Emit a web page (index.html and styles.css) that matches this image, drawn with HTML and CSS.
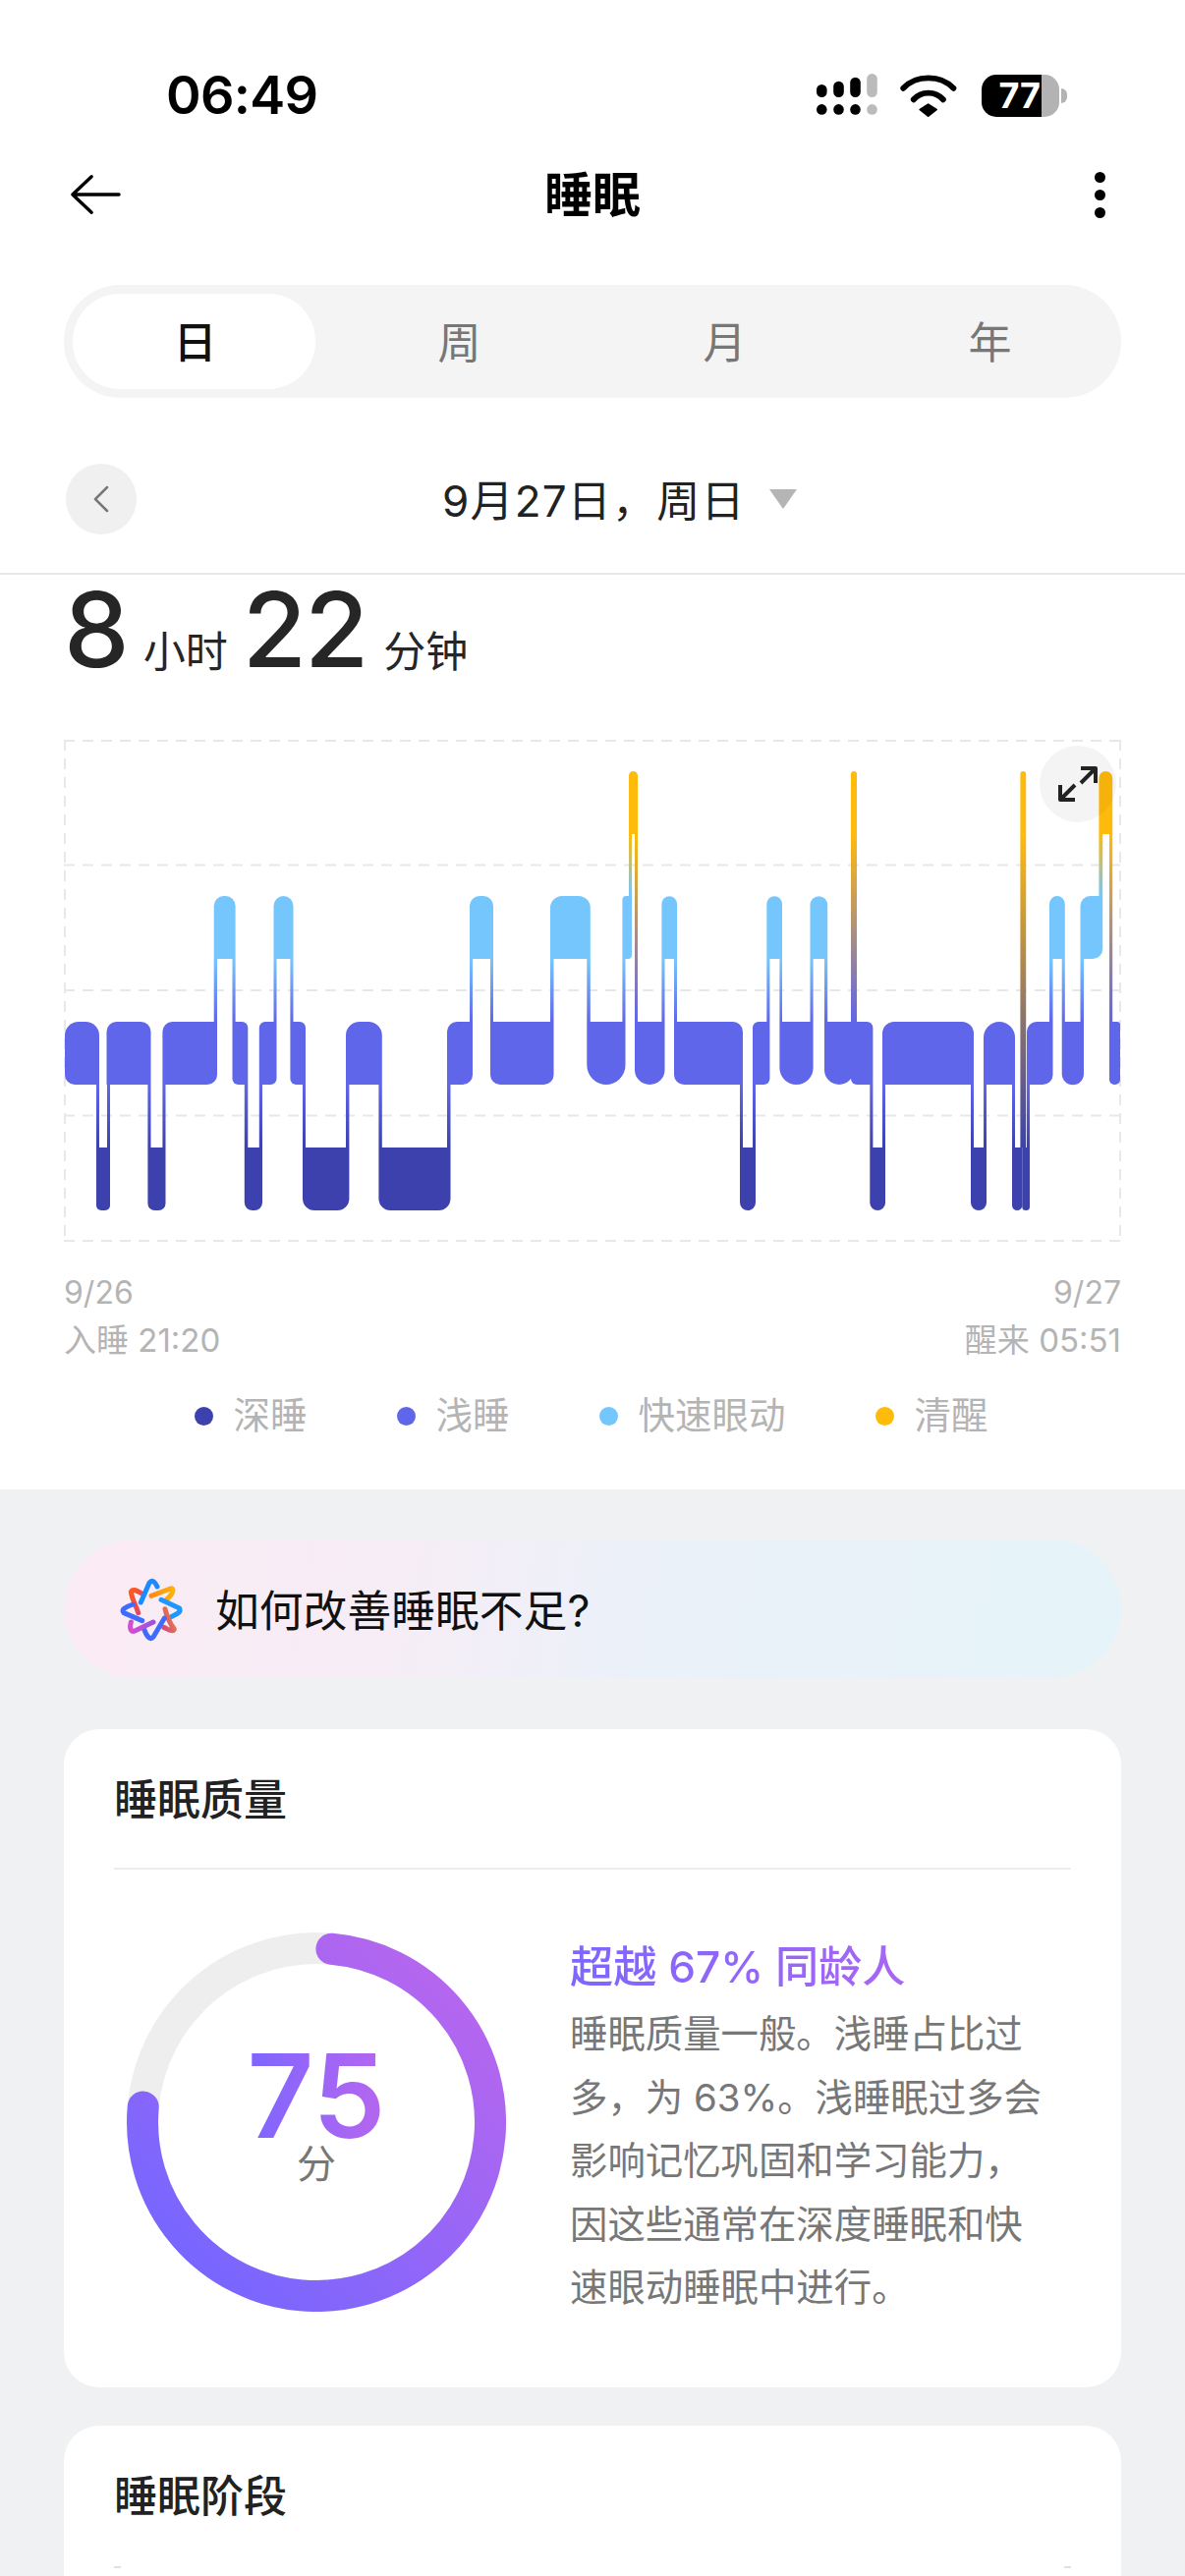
FILE: index.html
```html
<!DOCTYPE html>
<html lang="zh-CN">
<head>
<meta charset="utf-8">
<title>睡眠</title>
<link rel="stylesheet" href="styles.css">
</head>
<body>
<div class="page">
  <section class="top">
    <div class="status">
      <span class="time">06:49</span>
      <div class="status-icons">
        <svg class="signal" width="64" height="44" viewBox="0 0 64 44" aria-hidden="true">
          <g class="sig-on">
            <rect x="1" y="11" width="10.6" height="13" rx="5.3"/><rect x="18.2" y="7.7" width="10.6" height="16.3" rx="5.3"/><rect x="35.2" y="3.7" width="10.6" height="20.3" rx="5.3"/>
            <circle cx="6.3" cy="36.4" r="5.3"/><circle cx="23.5" cy="36.4" r="5.3"/><circle cx="40.5" cy="36.4" r="5.3"/>
          </g>
          <g class="sig-off"><rect x="52.2" width="10.6" height="24" rx="5.3"/><circle cx="57.5" cy="36.4" r="5.3"/></g>
        </svg>
        <svg class="wifi" width="58" height="44" viewBox="350 76 176 132" aria-hidden="true">
          <path class="wifi-arc" d="M360 120C400 78 475 78 515 120"/>
          <path class="wifi-arc" d="M392 155C415 128 460 128 483 155"/>
          <path class="wifi-dot" d="M437 170L462 186L437 206L412 186Z"/>
        </svg>
        <div class="battery"><div class="batt-fill">77</div><div class="batt-rest"></div></div>
        <span class="batt-nub"></span>
      </div>
    </div>
    <header class="nav">
      <svg class="back" width="54" height="42" viewBox="0 0 54 42" aria-hidden="true"><path d="M52 21H3M23 2L3 21L23 40"/></svg>
      <h1 class="nav-title">睡眠</h1>
      <div class="more"><i></i><i></i><i></i></div>
    </header>
    <nav class="tabs">
      <span class="tab tab-on">日</span><span class="tab">周</span><span class="tab">月</span><span class="tab">年</span>
    </nav>
    <div class="date-row">
      <span class="date-prev"><svg width="18" height="28" viewBox="0 0 18 28" aria-hidden="true"><path d="M15 2L3 14L15 26"/></svg></span>
      <span class="date-text">9月27日，周日</span>
      <span class="date-caret"></span>
    </div>
    <div class="duration">
      <span class="big">8</span><span class="unit">小时</span><span class="big">22</span><span class="unit">分钟</span>
    </div>
    <div class="chart">
      <svg width="1076" height="511" viewBox="0 0 1076 511" aria-hidden="true">
        <defs>
          <linearGradient id="remLight" x1="0" y1="0" x2="0" y2="1"><stop offset="0" stop-color="#75c6fd"/><stop offset="1" stop-color="#6066e9"/></linearGradient>
          <linearGradient id="lightDeep" x1="0" y1="0" x2="0" y2="1"><stop offset="0" stop-color="#6066e9"/><stop offset="1" stop-color="#3c41ae"/></linearGradient>
          <linearGradient id="awakeRem" x1="0" y1="0" x2="0" y2="1"><stop offset="0" stop-color="#ffbb0b"/><stop offset="1" stop-color="#75c6fd"/></linearGradient>
          <linearGradient id="awakeLight" x1="0" y1="0" x2="0" y2="1"><stop offset="0" stop-color="#ffbb0b"/><stop offset="1" stop-color="#6066e9"/></linearGradient>
          <linearGradient id="awakeDeep" x1="0" y1="0" x2="0" y2="1"><stop offset="0" stop-color="#ffbb0b"/><stop offset="1" stop-color="#3c41ae"/></linearGradient>
        </defs>
        <g class="grid">
          <path d="M0 1H1076M0 127.5H1076M0 255H1076M0 382.5H1076M0 510H1076M1 0V511M1075 0V511"/>
        </g>
        <g fill="url(#lightDeep)">
          <rect x="33" y="351" width="3" height="64"/><rect x="44" y="351" width="3" height="64"/><rect x="85.4" y="351" width="3.1" height="64"/><rect x="100.4" y="351" width="3.1" height="64"/><rect x="183.8" y="351" width="3.5" height="64"/><rect x="198.8" y="351" width="3.2" height="64"/><rect x="243" y="351" width="3" height="64"/><rect x="287" y="351" width="3.4" height="64"/><rect x="320.4" y="351" width="3.4" height="64"/><rect x="390" y="351" width="3.5" height="64"/><rect x="688" y="351" width="3" height="64"/><rect x="701" y="351" width="3" height="64"/><rect x="820.3" y="351" width="3.1" height="64"/><rect x="833" y="351" width="3" height="64"/><rect x="923" y="351" width="3" height="64"/><rect x="936" y="351" width="3" height="64"/><rect x="965" y="351" width="3" height="64"/><rect x="980" y="351" width="3" height="64"/>
        </g>
        <g fill="url(#remLight)">
          <rect x="152.7" y="223" width="3.3" height="64"/><rect x="171.5" y="223" width="3.1" height="64"/><rect x="213.5" y="223" width="3" height="64"/><rect x="230.4" y="223" width="3.1" height="64"/><rect x="413" y="223" width="3" height="64"/><rect x="434" y="223" width="3" height="64"/><rect x="495" y="223" width="3.5" height="64"/><rect x="532.3" y="223" width="3.5" height="64"/><rect x="568.4" y="223" width="3.1" height="64"/><rect x="608.4" y="223" width="3.1" height="64"/><rect x="621" y="223" width="3" height="64"/><rect x="715.3" y="223" width="3.1" height="64"/><rect x="728.4" y="223" width="2.6" height="64"/><rect x="759.5" y="223" width="3.1" height="64"/><rect x="774" y="223" width="3.2" height="64"/><rect x="1003" y="223" width="3.5" height="64"/><rect x="1015.7" y="223" width="3.1" height="64"/><rect x="1034.5" y="223" width="3.5" height="64"/>
        </g>
        <g fill="url(#awakeRem)">
          <rect x="575" y="96" width="3" height="63"/><rect x="1053.4" y="96" width="3.8" height="63"/>
        </g>
        <g fill="url(#awakeLight)">
          <rect x="581" y="96" width="3" height="191"/><rect x="801" y="96" width="6" height="191"/><rect x="1064" y="96" width="3.2" height="191"/>
        </g>
        <rect x="973.4" y="96" width="5.8" height="319" fill="url(#awakeDeep)"/>
        <g class="s-light">
          <path d="M15 287H22a14 14 0 0 1 14 14V351H11a10 10 0 0 1-10-10V301a14 14 0 0 1 14-14Z"/>
          <path d="M53.5 287H78.5a10 10 0 0 1 10 10V351H43.5V297a10 10 0 0 1 10-10Z"/>
          <path d="M110.4 287H156V341a10 10 0 0 1-10 10H100.4V297a10 10 0 0 1 10-10Z"/>
          <path d="M171.5 287H181.3a6 6 0 0 1 6 6V351H177.5a6 6 0 0 1-6-6Z"/>
          <path d="M204.8 287H216.5V345a6 6 0 0 1-6 6H198.8V293a6 6 0 0 1 6-6Z"/>
          <path d="M230.4 287H240a6 6 0 0 1 6 6V351H236.4a6 6 0 0 1-6-6Z"/>
          <path d="M301 287H309.8a14 14 0 0 1 14 14V351H287V301a14 14 0 0 1 14-14Z"/>
          <path d="M400 287H416V341a10 10 0 0 1-10 10H390V297a10 10 0 0 1 10-10Z"/>
          <path d="M434 287H498.5V341a10 10 0 0 1-10 10H444a10 10 0 0 1-10-10Z"/>
          <path d="M532.3 287H571.5V331a20 20 0 0 1-20 20H552.3a20 20 0 0 1-20-20Z"/>
          <path d="M581 287H611.5V336a15 15 0 0 1-15 15H596a15 15 0 0 1-15-15Z"/>
          <path d="M621 287H681a10 10 0 0 1 10 10V351H631a10 10 0 0 1-10-10Z"/>
          <path d="M707 287H718.4V345a6 6 0 0 1-6 6H701V293a6 6 0 0 1 6-6Z"/>
          <path d="M728.4 287H762.6V334a17 17 0 0 1-17 17H745.4a17 17 0 0 1-17-17Z"/>
          <path d="M774 287H804V336a15 15 0 0 1-15 15H789a15 15 0 0 1-15-15Z"/>
          <path d="M801 287H817.4a6 6 0 0 1 6 6V351H807a6 6 0 0 1-6-6Z"/>
          <path d="M845 287H914a12 12 0 0 1 12 12V351H833V299a12 12 0 0 1 12-12Z"/>
          <path d="M952 287a16 16 0 0 1 16 16V351H936V303a16 16 0 0 1 16-16Z"/>
          <path d="M990 287H1006.5V341a10 10 0 0 1-10 10H980V297a10 10 0 0 1 10-10Z"/>
          <path d="M1015.7 287H1038V340a11 11 0 0 1-22.3 0Z"/>
          <path d="M1064 287H1072a3 3 0 0 1 3 3V346a5 5 0 0 1-5 5H1069a5 5 0 0 1-5-5Z"/>
        </g>
        <g class="s-deep">
          <path d="M33 415H47V474a5 5 0 0 1-5 5H38a5 5 0 0 1-5-5Z"/>
          <path d="M85.4 415H103.5V472a7 7 0 0 1-7 7H92.4a7 7 0 0 1-7-7Z"/>
          <path d="M183.8 415H202V471a8 8 0 0 1-8 8H191.8a8 8 0 0 1-8-8Z"/>
          <path d="M243 415H290.4V467a12 12 0 0 1-12 12H255a12 12 0 0 1-12-12Z"/>
          <path d="M320.4 415H393.5V467a12 12 0 0 1-12 12H332.4a12 12 0 0 1-12-12Z"/>
          <path d="M688 415H704V471a8 8 0 0 1-16 0Z"/>
          <path d="M820.3 415H836V471.2a7.85 7.85 0 0 1-15.7 0Z"/>
          <path d="M923 415H939V471a8 8 0 0 1-16 0Z"/>
          <path d="M965 415H975.3V473.9a5.15 5.15 0 0 1-10.3 0Z"/>
          <path d="M975.3 415H983V475.2a3.85 3.85 0 0 1-7.7 0Z"/>
        </g>
        <g class="s-rem">
          <path d="M152.7 223V169a10 10 0 0 1 10-10H164.6a10 10 0 0 1 10 10V223Z"/>
          <path d="M213.5 223V169a10 10 0 0 1 20 0V223Z"/>
          <path d="M413 223V169a10 10 0 0 1 10-10H427a10 10 0 0 1 10 10V223Z"/>
          <path d="M495 223V171a12 12 0 0 1 12-12H523.8a12 12 0 0 1 12 12V223Z"/>
          <path d="M572.4 159H578V219a4 4 0 0 1-4 4H568.4V163a4 4 0 0 1 4-4Z"/>
          <path d="M608.4 223V167a7.8 7.8 0 0 1 15.6 0V223Z"/>
          <path d="M715.3 223V167a7.85 7.85 0 0 1 15.7 0V223Z"/>
          <path d="M759.5 223V168a8.85 8.85 0 0 1 17.7 0V223Z"/>
          <path d="M1003 223V167a7.9 7.9 0 0 1 15.8 0V223Z"/>
          <path d="M1044.5 159H1057.2V213a10 10 0 0 1-10 10H1034.5V169a10 10 0 0 1 10-10Z"/>
        </g>
        <g class="s-awake">
          <path d="M575 96V36.5a4.5 4.5 0 0 1 9 0V96Z"/>
          <path d="M801 96V35a3 3 0 0 1 6 0V96Z"/>
          <path d="M973.4 96V35a2.9 2.9 0 0 1 5.8 0V96Z"/>
          <path d="M1053.4 96V39a6.9 6.9 0 0 1 13.8 0V96Z"/>
        </g>
      </svg>
      <span class="expand">
        <svg width="40" height="40" viewBox="0 0 40 40" aria-hidden="true"><path d="M23 4H38V19M38 4L23 19M2 21V36H17M2 36L17 21"/></svg>
      </span>
    </div>
    <div class="chart-labels">
      <div><p>9/26</p><p>入睡 21:20</p></div>
      <div class="chart-labels-end"><p>9/27</p><p>醒来 05:51</p></div>
    </div>
    <ul class="legend">
      <li><i class="dot d-deep"></i>深睡</li>
      <li><i class="dot d-light"></i>浅睡</li>
      <li><i class="dot d-rem"></i>快速眼动</li>
      <li><i class="dot d-awake"></i>清醒</li>
    </ul>
  </section>
  <main class="lower">
    <div class="ask">
      <svg class="ask-star" width="72" height="72" viewBox="84 93 216 216" aria-hidden="true">
        <defs>
          <linearGradient id="starA" x1="0" y1="0" x2="1" y2="1"><stop offset="0" stop-color="#ff5b1f"/><stop offset="1" stop-color="#e0456a"/></linearGradient>
          <linearGradient id="starB" x1="0" y1="0" x2="1" y2="0"><stop offset="0" stop-color="#ff8a1c"/><stop offset="1" stop-color="#ffb300"/></linearGradient>
          <linearGradient id="starC" x1="1" y1="0" x2="0" y2="1"><stop offset="0" stop-color="#e8883c"/><stop offset="1" stop-color="#d84a7c"/></linearGradient>
          <linearGradient id="starD" x1="1" y1="0" x2="0" y2="0"><stop offset="0" stop-color="#a050e0"/><stop offset="1" stop-color="#d24fd0"/></linearGradient>
        </defs>
        <g class="star">
          <path stroke="url(#starA)" d="M152 212C146 190 132 170 130 148C135 136 150 146 162 152"/>
          <path stroke="#1a8cff" d="M160 180L186 120C195 108 205 120 210 132"/>
          <path stroke="url(#starB)" d="M192 160L250 138C262 135 262 150 238 172"/>
          <path stroke="#1f97ff" d="M222 172L278 198C284 212 268 216 252 224"/>
          <path stroke="url(#starC)" d="M234 200C240 226 246 240 262 262C258 272 244 262 230 256"/>
          <path stroke="#3f6cff" d="M232 228L198 286C188 296 178 284 170 262"/>
          <path stroke="url(#starD)" d="M198 240L140 268C126 270 126 254 130 240"/>
          <path stroke="#3f6cff" d="M164 236L108 212C98 202 114 194 136 186"/>
        </g>
      </svg>
      <span class="ask-text">如何改善睡眠不足?</span>
    </div>
    <article class="card card-quality">
      <h2 class="card-title">睡眠质量</h2>
      <div class="quality">
        <div class="ring">
          <svg width="386" height="386" viewBox="0 0 386 386" aria-hidden="true">
            <defs>
              <linearGradient id="ringGrad" gradientUnits="userSpaceOnUse" x1="330" y1="40" x2="60" y2="330"><stop offset="0" stop-color="#b766ee"/><stop offset="1" stop-color="#7866ff"/></linearGradient>
            </defs>
            <circle class="ring-track" cx="193" cy="193" r="177"/>
            <path class="ring-value" d="M208.4 16.7A177 177 0 1 1 16.7 177.6"/>
          </svg>
          <div class="ring-center">
            <span class="ring-score">75</span>
            <span class="ring-unit">分</span>
          </div>
        </div>
        <div class="quality-text">
          <h3 class="quality-head">超越 67% 同龄人</h3>
          <p class="quality-body">睡眠质量一般。浅睡占比过<br>多，为 63%。浅睡眠过多会<br>影响记忆巩固和学习能力，<br>因这些通常在深度睡眠和快<br>速眼动睡眠中进行。</p>
        </div>
      </div>
    </article>
    <article class="card card-stage">
      <h2 class="card-title card-title-plain">睡眠阶段</h2>
      <div class="stage-ticks"><i></i><i></i></div>
    </article>
  </main>
</div>
</body>
</html>
```
FILE: styles.css
```css
* { box-sizing: border-box; }
html, body { margin: 0; padding: 0; }
body {
  background: #f0f1f3;
  font-family: Inter, "Noto Sans CJK SC", sans-serif;
  color: #222;
}
h1, h2, h3, p, ul { margin: 0; padding: 0; font-weight: inherit; font-size: inherit; }
ul { list-style: none; }
i { display: block; font-style: normal; }
.page { width: 1206px; height: 2622px; overflow: hidden; }

.top { background: #fff; height: 1516px; }

.status { height: 150px; padding: 44px 0 0 169px; display: flex; align-items: center; justify-content: space-between; }
.time { font-size: 54px; font-weight: 600; color: #000; line-height: 1; letter-spacing: -0.7px; }
.status-icons { display: flex; align-items: center; padding-right: 120px; }
.signal { margin-right: 22px; }
.sig-on { fill: #000; }
.sig-off { fill: #bbb; }
.wifi { margin-right: 25px; }
.wifi-arc { fill: none; stroke: #000; stroke-width: 18; stroke-linecap: round; }
.wifi-dot { fill: #000; stroke: #000; stroke-width: 6; stroke-linejoin: round; }
.battery { width: 79px; height: 43px; border-radius: 15px; overflow: hidden; display: flex; }
.batt-fill { width: 61px; background: #000; color: #fff; font-size: 36px; font-weight: 700; line-height: 43px; text-align: right; padding-right: 1px; letter-spacing: 0; }
.batt-rest { flex: 1; background: #b3b3b3; }
.batt-nub { width: 6px; height: 15px; margin-left: 2px; background: #b3b3b3; border-radius: 0 8px 8px 0; }

.nav { height: 96px; padding: 0 81px; display: grid; grid-template-columns: 1fr auto 1fr; align-items: center; }
.back { width: 52px; margin-left: -10px; }
.back path { fill: none; stroke: #000; stroke-width: 3.5; stroke-linecap: round; stroke-linejoin: round; }
.nav-title { font-size: 49px; font-weight: 600; color: #000; line-height: 1; }
.more { justify-self: end; display: flex; flex-direction: column; gap: 7px; }
.more i { width: 11px; height: 11px; border-radius: 50%; background: #000; }

.tabs { margin: 44px 65px 0; height: 115px; padding: 9px; background: #f4f4f4; border-radius: 58px; display: flex; gap: 23px; }
.tab { width: 247px; border-radius: 48px; display: flex; align-items: center; justify-content: center; font-size: 44px; color: #777; padding-bottom: 3px; }
.tab-on { background: #fff; color: #111; font-weight: 500; padding-left: 2px; }

.date-row { margin-top: 67px; height: 113px; padding: 0 0 39px 67px; border-bottom: 2px solid #e6e6e6; display: flex; align-items: center; }
.date-prev { width: 72px; height: 72px; border-radius: 50%; background: #f0f0f0; display: flex; align-items: center; justify-content: center; }
.date-prev path { fill: none; stroke: #777; stroke-width: 2.5; stroke-linecap: round; stroke-linejoin: round; }
.date-text { margin: 0 0 2px 311px; font-size: 44px; letter-spacing: 1.2px; color: #222; white-space: nowrap; }
.date-caret { margin: 0 0 0 24px; width: 0; height: 0; border-left: 14px solid transparent; border-right: 14px solid transparent; border-top: 20px solid #b5b5b5; }

.duration { padding: 3px 0 0 65px; height: 110px; display: flex; align-items: baseline; color: #262626; }
.big { font-size: 106px; font-weight: 500; line-height: 106px; letter-spacing: -2px; }
.unit { font-size: 43px; margin: 0 15px 0 16px; line-height: 1; }
.unit:last-child { margin-left: 17px; }

.chart { position: relative; margin: 58px 65px 0; height: 511px; }
.chart svg { display: block; }
.grid path { fill: none; stroke: #e8e8e8; stroke-width: 2; stroke-dasharray: 11 8; }
.s-light { fill: #6066e9; }
.s-deep { fill: #3c41ae; }
.s-rem { fill: #75c6fd; }
.s-awake { fill: #ffbb0b; }
.expand { position: absolute; left: 993px; top: 6px; width: 78px; height: 78px; border-radius: 50%; background: rgba(0, 0, 0, 0.045); display: flex; align-items: center; justify-content: center; }
.expand path { fill: none; stroke: #222; stroke-width: 4; stroke-linejoin: round; }

.chart-labels { margin: 27px 65px 0; display: flex; justify-content: space-between; font-size: 33px; line-height: 49px; color: #b4b4b4; }
.chart-labels p:first-child { font-size: 32px; }
.chart-labels-end { text-align: right; }
.legend { margin-top: 30px; height: 44px; padding-right: 3px; display: flex; justify-content: center; gap: 91px; font-size: 37.5px; line-height: 44px; color: #b4b4b4; }
.legend li { display: flex; align-items: center; gap: 21px; }
.dot { width: 19px; height: 19px; border-radius: 50%; }
.d-deep { background: #3c41ae; }
.d-light { background: #6066e9; }
.d-rem { background: #75c6fd; }
.d-awake { background: #ffbb0b; }

.lower { padding: 51px 65px 0; }
.ask { height: 141px; border-radius: 71px; background: linear-gradient(100deg, #fbebf4 0%, #f6edf6 32%, #ebf1f9 55%, #e5f4f8 100%); display: flex; align-items: center; padding-left: 53px; }
.ask-text { margin: 0 0 2px 29px; font-size: 44.8px; color: #111; white-space: nowrap; }
.star path { fill: none; stroke-width: 15; stroke-linecap: round; stroke-linejoin: round; }

.card { background: #fff; border-radius: 36px; }
.card-quality { margin-top: 52px; height: 670px; padding: 0 51px; }
.card-stage { margin-top: 39px; height: 300px; padding: 0 51px; }
.card-title { height: 143px; border-bottom: 2px solid #ececec; font-size: 44px; font-weight: 500; line-height: 144px; color: #222; }
.card-title-plain { border-bottom: 0; height: 143px; line-height: 144px; }
.stage-ticks { display: flex; justify-content: space-between; }
.stage-ticks i { width: 7px; height: 2px; background: #e0e0e0; }

.quality { display: flex; padding: 64px 0 0 13px; }
.ring { position: relative; width: 386px; height: 386px; flex: none; }
.ring svg { display: block; }
.ring-track { fill: none; stroke: #eee; stroke-width: 32; }
.ring-value { fill: none; stroke: url(#ringGrad); stroke-width: 32; stroke-linecap: round; }
.ring-center { position: absolute; left: 0; right: 0; top: 110px; display: flex; flex-direction: column; align-items: center; }
.ring-score { font-size: 118px; font-weight: 600; line-height: 113px; background: linear-gradient(90deg, #7d66ff, #b766ee); -webkit-background-clip: text; background-clip: text; color: transparent; }
.ring-unit { font-size: 40px; line-height: 40px; margin-top: -7px; color: #777; }
.quality-text { margin-left: 65px; }
.quality-head { display: inline-block; font-size: 44.2px; font-weight: 500; line-height: 50px; margin-top: 10px; background: linear-gradient(90deg, #7d66ff, #a866f2); -webkit-background-clip: text; background-clip: text; color: transparent; white-space: nowrap; }
.quality-body { font-size: 38.4px; line-height: 64.5px; color: #777; white-space: nowrap; margin-top: 11px; }
```
